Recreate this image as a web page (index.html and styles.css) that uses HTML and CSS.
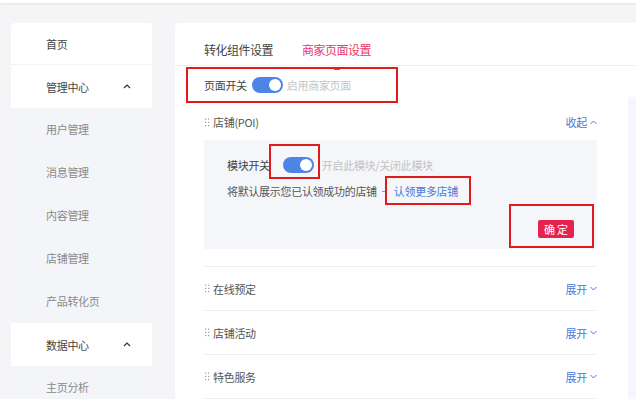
FILE: index.html
```html
<!DOCTYPE html>
<html lang="zh-CN">
<head>
  <meta charset="UTF-8">
  <meta name="viewport" content="width=device-width, initial-scale=1.0">
  <title>商家页面设置</title>
  <link rel="stylesheet" href="styles.css">
</head>
<body>
  <header class="topbar"></header>

  <div class="app">
    <aside class="sidebar">
      <div class="menu-item first">首页</div>

      <div class="menu-title">管理中心
        <svg class="arrow" width="8" height="5" viewBox="0 0 8 5"><polyline points="1,4 4,1 7,4" fill="none" stroke="#333" stroke-width="1.2"/></svg>
      </div>
      <div class="submenu">
        <div class="sub-item">用户管理</div>
        <div class="sub-item">消息管理</div>
        <div class="sub-item">内容管理</div>
        <div class="sub-item">店铺管理</div>
        <div class="sub-item">产品转化页</div>
      </div>

      <div class="menu-title">数据中心
        <svg class="arrow" width="8" height="5" viewBox="0 0 8 5"><polyline points="1,4 4,1 7,4" fill="none" stroke="#333" stroke-width="1.2"/></svg>
      </div>
      <div class="submenu">
        <div class="sub-item">主页分析</div>
      </div>
    </aside>

    <main class="panel">
      <div class="tabs">
        <span class="tab">转化组件设置</span>
        <span class="tab active">商家页面设置</span>
      </div>

      <div class="panel-body">
        <div class="content">
          <div class="switch-row">
            <span class="label">页面开关</span>
            <span class="toggle on"></span>
            <span class="hint">启用商家页面</span>
            <span class="mark mark-page"></span>
          </div>

          <div class="section-head">
            <span class="grip"><svg width="5" height="9" viewBox="0 0 5 9"><g fill="#9a9a9a"><rect x="0" y="0.5" width="1.2" height="1.2"/><rect x="3" y="0.5" width="1.2" height="1.2"/><rect x="0" y="3.8" width="1.2" height="1.2"/><rect x="3" y="3.8" width="1.2" height="1.2"/><rect x="0" y="7" width="1.2" height="1.2"/><rect x="3" y="7" width="1.2" height="1.2"/></g></svg></span>
            <span class="section-name">店铺(POI)</span>
            <span class="fold">收起
              <svg width="7" height="5" viewBox="0 0 7 5"><polyline points="0.5,4 3.5,1 6.5,4" fill="none" stroke="#4a7bd6" stroke-width="1"/></svg>
            </span>
          </div>

          <div class="module-box">
            <div class="module-line">
              <span class="label">模块开关</span>
              <span class="toggle-wrap">
                <span class="toggle on"></span>
                <span class="mark mark-toggle"></span>
              </span>
              <span class="hint">开启此模块/关闭此模块</span>
            </div>
            <div class="module-line">
              <span class="text">将默认展示您已认领成功的店铺</span>
              <span class="dash"></span>
              <span class="link-wrap">
                <a class="link" href="#">认领更多店铺</a>
                <span class="mark mark-link"></span>
              </span>
            </div>
            <div class="module-foot">
              <span class="btn-wrap">
                <button class="btn-ok">确定</button>
                <span class="mark mark-btn"></span>
              </span>
            </div>
          </div>

          <div class="section-list">
            <div class="section-row">
              <span class="grip"><svg width="5" height="9" viewBox="0 0 5 9"><g fill="#9a9a9a"><rect x="0" y="0.5" width="1.2" height="1.2"/><rect x="3" y="0.5" width="1.2" height="1.2"/><rect x="0" y="3.8" width="1.2" height="1.2"/><rect x="3" y="3.8" width="1.2" height="1.2"/><rect x="0" y="7" width="1.2" height="1.2"/><rect x="3" y="7" width="1.2" height="1.2"/></g></svg></span>
              <span class="section-name">在线预定</span>
              <span class="fold">展开
                <svg width="7" height="5" viewBox="0 0 7 5"><polyline points="0.5,1 3.5,4 6.5,1" fill="none" stroke="#4a7bd6" stroke-width="1"/></svg>
              </span>
            </div>
            <div class="section-row">
              <span class="grip"><svg width="5" height="9" viewBox="0 0 5 9"><g fill="#9a9a9a"><rect x="0" y="0.5" width="1.2" height="1.2"/><rect x="3" y="0.5" width="1.2" height="1.2"/><rect x="0" y="3.8" width="1.2" height="1.2"/><rect x="3" y="3.8" width="1.2" height="1.2"/><rect x="0" y="7" width="1.2" height="1.2"/><rect x="3" y="7" width="1.2" height="1.2"/></g></svg></span>
              <span class="section-name">店铺活动</span>
              <span class="fold">展开
                <svg width="7" height="5" viewBox="0 0 7 5"><polyline points="0.5,1 3.5,4 6.5,1" fill="none" stroke="#4a7bd6" stroke-width="1"/></svg>
              </span>
            </div>
            <div class="section-row">
              <span class="grip"><svg width="5" height="9" viewBox="0 0 5 9"><g fill="#9a9a9a"><rect x="0" y="0.5" width="1.2" height="1.2"/><rect x="3" y="0.5" width="1.2" height="1.2"/><rect x="0" y="3.8" width="1.2" height="1.2"/><rect x="3" y="3.8" width="1.2" height="1.2"/><rect x="0" y="7" width="1.2" height="1.2"/><rect x="3" y="7" width="1.2" height="1.2"/></g></svg></span>
              <span class="section-name">特色服务</span>
              <span class="fold">展开
                <svg width="7" height="5" viewBox="0 0 7 5"><polyline points="0.5,1 3.5,4 6.5,1" fill="none" stroke="#4a7bd6" stroke-width="1"/></svg>
              </span>
            </div>
          </div>
        </div>

        <div class="preview"></div>
      </div>
    </main>
  </div>
</body>
</html>
```

FILE: styles.css
```css
/* Reset */
* {
  margin: 0;
  padding: 0;
  box-sizing: border-box;
}

body {
  font-family: "Noto Sans CJK SC", "Noto Sans", sans-serif;
  font-size: 11px;
  letter-spacing: -0.3px;
  color: #444;
  background-color: #f5f5f7;
  height: 399px;
  overflow: hidden;
}

.topbar {
  height: 3px;
  background-color: #fff;
  box-shadow: 0 1px 3px rgba(0, 0, 0, 0.08);
}

.app {
  display: flex;
  padding: 20px 0 0 11px;
}

/* Sidebar */
.sidebar {
  width: 141px;
  flex-shrink: 0;
  border-radius: 4px 4px 0 0;
  overflow: hidden;
}

.menu-item,
.menu-title {
  display: flex;
  align-items: center;
  justify-content: space-between;
  height: 43px;
  padding: 0 21px 0 35px;
  background-color: #fff;
  color: #444;
}

.menu-item.first {
  height: 42px;
  border-bottom: 1px solid #f3f3f3;
}

.submenu {
  background-color: #f4f5f9;
}

.sub-item {
  height: 43px;
  line-height: 43px;
  padding-left: 35px;
  color: #8a8a8a;
}

/* Main panel */
.panel {
  flex: 1;
  margin-left: 23px;
  background-color: #fff;
  border-radius: 4px 0 0 0;
  min-height: 380px;
}

.tabs {
  display: flex;
  gap: 29px;
  height: 43px;
  padding: 18px 0 0 29px;
  border-bottom: 1px solid #eeeeee;
}

.tab {
  position: relative;
  font-size: 12px;
  letter-spacing: -0.5px;
  line-height: 18px;
  color: #444;
}

.tab.active {
  color: #e8386a;
}

.tab.active::after {
  content: "";
  position: absolute;
  left: 50%;
  bottom: -5px;
  width: 6px;
  height: 3px;
  margin-left: -3px;
  background-color: #e8386a;
}

.panel-body {
  display: flex;
}

.content {
  width: 393px;
  margin-left: 29px;
  flex-shrink: 0;
}

.preview {
  flex: 1;
  margin: 31px 0 0 31px;
  background-color: #f6f7fc;
}

/* Switch rows */
.switch-row {
  position: relative;
  display: flex;
  align-items: center;
  height: 38px;
}

.label {
  color: #444;
}

.switch-row .toggle {
  margin: 0 4px 0 5px;
}

.hint {
  color: #c4c4c4;
}

.toggle {
  position: relative;
  display: inline-block;
  width: 31px;
  height: 16px;
  border-radius: 8px;
  background-color: #ccc;
}

.toggle.on {
  background-color: #4d85e6;
}

.toggle::after {
  content: "";
  position: absolute;
  top: 2px;
  left: 2px;
  width: 12px;
  height: 12px;
  border-radius: 50%;
  background-color: #fff;
}

.toggle.on::after {
  left: 17px;
}

/* Red annotation frames */
.mark {
  position: absolute;
  border: 2px solid #e01b1b;
  pointer-events: none;
}

.mark-page {
  left: -18px;
  top: 1px;
  width: 212px;
  height: 36px;
}

.toggle-wrap,
.link-wrap,
.btn-wrap {
  position: relative;
  display: inline-flex;
  align-items: center;
}

.toggle-wrap {
  margin: 0 8px 0 13px;
}

.mark-toggle {
  left: -14px;
  top: -13px;
  width: 51px;
  height: 35px;
}

.dash {
  width: 3px;
  height: 1px;
  margin-left: 5px;
  background-color: #999;
}

.link-wrap {
  padding-left: 9px;
}

.link {
  color: #4a7bd6;
  text-decoration: none;
}

.mark-link {
  left: 0;
  top: 50%;
  margin-top: -15px;
  width: 86px;
  height: 29px;
}

/* POI section */
.section-head,
.section-row {
  display: flex;
  align-items: center;
  height: 36px;
  padding-left: 1px;
}

.grip {
  display: inline-flex;
  width: 8px;
}

.section-name {
  flex: 1;
  color: #555;
}

.fold {
  display: inline-flex;
  align-items: center;
  gap: 3px;
  color: #4a7bd6;
}

.module-box {
  background-color: #f5f6f9;
  padding: 12px 23px 11px 23px;
  height: 109px;
}

.module-line {
  display: flex;
  align-items: center;
  height: 26px;
}

.text {
  color: #555;
}

.module-foot {
  display: flex;
  justify-content: flex-end;
  margin-top: 16px;
}

.btn-ok {
  width: 36px;
  height: 18px;
  border: none;
  border-radius: 2px;
  background-color: #e6234f;
  color: #fff;
  font-family: inherit;
  font-size: 11px;
  letter-spacing: 2px;
  padding-left: 2px;
}

.mark-btn {
  left: -29px;
  top: -16px;
  width: 85px;
  height: 44px;
}

.section-list {
  margin-top: 17px;
  border-top: 1px solid #f0f0f0;
}

.section-row {
  height: 44px;
  border-bottom: 1px solid #f0f0f0;
}
```
